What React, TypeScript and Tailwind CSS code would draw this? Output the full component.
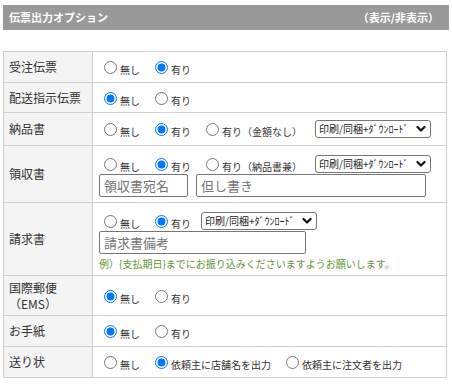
import React from "react";

const FONT = { fontFamily: '"Noto Sans CJK JP", "Noto Sans", sans-serif' };

function Radio({ name, label, checked }: { name: string; label: string; checked?: boolean }) {
  return (
    <label className="mr-[10px] whitespace-nowrap text-[10px] text-[#333]">
      <input
        type="radio"
        name={name}
        defaultChecked={checked}
        className="m-[3px_3px_0_5px]"
      />
      {label}
    </label>
  );
}

function Select() {
  return (
    <span className="relative flex h-[18px] w-[116px]">
      <select className="h-[18px] w-[116px] appearance-none rounded-[3px] border border-[#767676] bg-white pl-[3px] text-[10px] leading-[16px] text-[#222]">
        <option>印刷/同梱+ﾀﾞｳﾝﾛｰﾄﾞ</option>
      </select>
      <svg
        className="pointer-events-none absolute right-[5px] top-[5px]"
        width="10"
        height="8"
        viewBox="0 0 10 8"
        fill="none"
        stroke="#111"
        strokeWidth="2.2"
        strokeLinecap="round"
        strokeLinejoin="round"
      >
        <polyline points="1.5 2 5 5.5 8.5 2" />
      </svg>
    </span>
  );
}

function TextBox({ placeholder, width }: { placeholder: string; width: string }) {
  return (
    <input
      type="text"
      placeholder={placeholder}
      className={`h-[23px] ${width} rounded-[2px] border border-[#767676] bg-white px-[4px] text-[13px] text-[#333] placeholder:text-[#757575]`}
    />
  );
}

function Row({ label, height, children }: { label: React.ReactNode; height: string; children: React.ReactNode }) {
  return (
    <tr className={height}>
      <td className="w-[89px] border border-[#cfcfcf] bg-[#f3f4f3] pl-[5px] align-middle text-[12px] leading-[16px] text-[#333]">
        {label}
      </td>
      <td className="border border-[#cfcfcf] bg-white pl-[6px] align-middle">{children}</td>
    </tr>
  );
}

export default function App() {
  return (
    <div className="min-h-[386px] w-[452px] bg-white pt-[5px]" style={FONT}>
      <div className="mx-[3px] flex h-[25px] items-center justify-between bg-[#999999] pl-[6px] pr-[10px] text-[11px] font-bold text-white">
        <span>伝票出力オプション</span>
        <span>（表示/非表示）</span>
      </div>

      <table className="ml-[3px] mt-[21px] w-[444px] border-collapse">
        <tbody>
          <Row label="受注伝票" height="h-[31px]">
            <Radio name="r1" label="無し" />
            <Radio name="r1" label="有り" checked />
          </Row>
          <Row label="配送指示伝票" height="h-[30px]">
            <Radio name="r2" label="無し" checked />
            <Radio name="r2" label="有り" />
          </Row>
          <Row label="納品書" height="h-[33px]">
            <div className="flex items-center">
              <Radio name="r3" label="無し" />
              <Radio name="r3" label="有り" checked />
              <Radio name="r3" label="有り（金額なし）" />
              <span className="ml-[3px]">
                <Select />
              </span>
            </div>
          </Row>
          <Row label="領収書" height="h-[57px]">
            <div className="flex flex-col pb-[5px] pt-[8px]">
              <div className="flex h-[20px] items-center">
                <Radio name="r4" label="無し" />
                <Radio name="r4" label="有り" checked />
                <Radio name="r4" label="有り（納品書兼）" />
                <span className="ml-[3px]">
                  <Select />
                </span>
              </div>
              <div className="flex gap-[8px]">
                <TextBox placeholder="領収書宛名" width="w-[89px]" />
                <TextBox placeholder="但し書き" width="w-[230px]" />
              </div>
            </div>
          </Row>
          <Row label="請求書" height="h-[73px]">
            <div className="flex flex-col pb-[4px] pt-[8px]">
              <div className="flex h-[20px] items-center">
                <Radio name="r5" label="無し" />
                <Radio name="r5" label="有り" checked />
                <Select />
              </div>
              <TextBox placeholder="請求書備考" width="w-[207px]" />
              <div className="mt-[2px] text-[10px] leading-[15px] text-[#5f9632]">
                例）{"{"}支払期日{"}"}までにお振り込みくださいますようお願いします。
              </div>
            </div>
          </Row>
          <Row
            label={
              <>
                国際郵便
                <br />
                （EMS）
              </>
            }
            height="h-[40px]"
          >
            <Radio name="r6" label="無し" checked />
            <Radio name="r6" label="有り" />
          </Row>
          <Row label="お手紙" height="h-[31px]">
            <Radio name="r7" label="無し" checked />
            <Radio name="r7" label="有り" />
          </Row>
          <Row label="送り状" height="h-[31px]">
            <Radio name="r8" label="無し" />
            <Radio name="r8" label="依頼主に店舗名を出力" checked />
            <Radio name="r8" label="依頼主に注文者を出力" />
          </Row>
        </tbody>
      </table>
    </div>
  );
}
